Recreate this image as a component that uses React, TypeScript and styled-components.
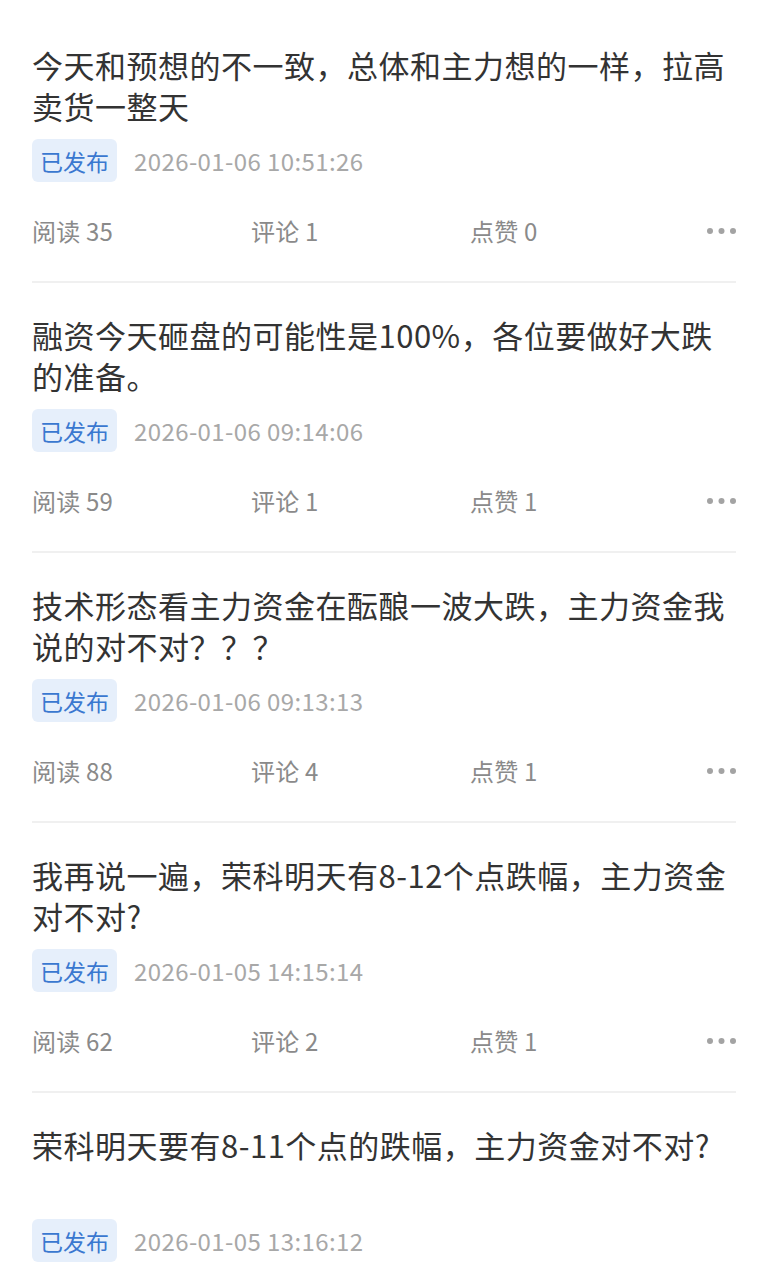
import React from "react";
import styled, { createGlobalStyle } from "styled-components";

const GlobalStyle = createGlobalStyle`
  html, body {
    margin: 0;
    padding: 0;
    background: #ffffff;
  }
  body {
    font-family: "Noto Sans CJK SC", "Noto Sans", sans-serif;
    -webkit-font-smoothing: antialiased;
  }
`;

const Page = styled.div`
  background: #ffffff;
  padding: 13px 32px 0;
`;

const Item = styled.article`
  padding: 31px 0 35px;
  border-bottom: 2px solid #f0f0f0;
`;

const Title = styled.h3`
  margin: 0;
  font-size: 31px;
  font-weight: 400;
  letter-spacing: 0.5px;
  line-height: 41px;
  min-height: 82px;
  color: #333333;
  font-family: "Noto Sans CJK SC", sans-serif;
`;

const Meta = styled.div`
  display: flex;
  align-items: center;
  gap: 17px;
  margin-top: 13px;
`;

const Badge = styled.span`
  display: inline-flex;
  align-items: center;
  justify-content: center;
  height: 43px;
  padding: 0 8px;
  border-radius: 6px;
  background: #e6effb;
  color: #3a78d0;
  font-size: 23px;
  box-sizing: border-box;
`;

const Time = styled.span`
  font-size: 24px;
  color: #a8a8a8;
  letter-spacing: 0.4px;
`;

const Stats = styled.div`
  display: grid;
  grid-template-columns: 219px 219px 1fr auto;
  align-items: center;
  margin-top: 34px;
  height: 30px;
`;

const Stat = styled.span`
  font-size: 24px;
  line-height: 30px;
  letter-spacing: 0.2px;
  color: #8a8a8a;
`;

const More = styled.svg`
  display: block;
  width: 32px;
  height: 8px;
`;

type Post = {
  title: string;
  time: string;
  read: number;
  comment: number;
  like: number;
};

const posts: Post[] = [
  {
    title: "今天和预想的不一致，总体和主力想的一样，拉高卖货一整天",
    time: "2026-01-06 10:51:26",
    read: 35,
    comment: 1,
    like: 0,
  },
  {
    title: "融资今天砸盘的可能性是100%，各位要做好大跌的准备。",
    time: "2026-01-06 09:14:06",
    read: 59,
    comment: 1,
    like: 1,
  },
  {
    title: "技术形态看主力资金在酝酿一波大跌，主力资金我说的对不对？？？",
    time: "2026-01-06 09:13:13",
    read: 88,
    comment: 4,
    like: 1,
  },
  {
    title: "我再说一遍，荣科明天有8-12个点跌幅，主力资金对不对?",
    time: "2026-01-05 14:15:14",
    read: 62,
    comment: 2,
    like: 1,
  },
  {
    title: "荣科明天要有8-11个点的跌幅，主力资金对不对?",
    time: "2026-01-05 13:16:12",
    read: 0,
    comment: 0,
    like: 0,
  },
];

const MoreIcon = () => (
  <More viewBox="0 0 32 8">
    <circle cx="6" cy="4" r="3" fill="#a3a3a3" />
    <circle cx="17.5" cy="4" r="3" fill="#a3a3a3" />
    <circle cx="29" cy="4" r="3" fill="#a3a3a3" />
  </More>
);

const PostItem = ({ post }: { post: Post }) => (
  <Item>
    <Title>{post.title}</Title>
    <Meta>
      <Badge>已发布</Badge>
      <Time>{post.time}</Time>
    </Meta>
    <Stats>
      <Stat>阅读 {post.read}</Stat>
      <Stat>评论 {post.comment}</Stat>
      <Stat>点赞 {post.like}</Stat>
      <MoreIcon />
    </Stats>
  </Item>
);

export default function App() {
  return (
    <>
      <GlobalStyle />
      <Page>
        {posts.map((p, i) => (
          <PostItem key={i} post={p} />
        ))}
      </Page>
    </>
  );
}
